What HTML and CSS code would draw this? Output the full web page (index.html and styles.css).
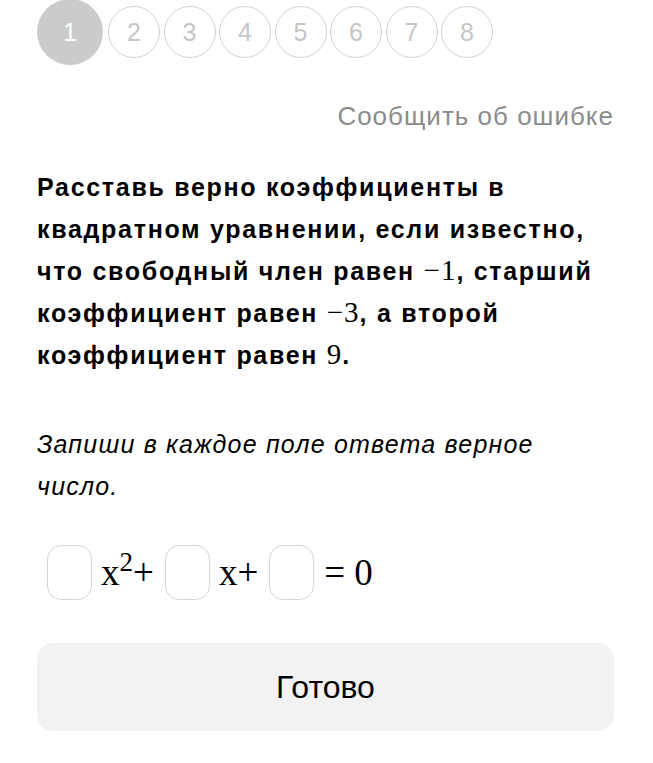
FILE: index.html
```html
<!DOCTYPE html>
<html>
<head>
  <meta charset="utf-8">
  <title>Задание</title>
  <link rel="stylesheet" href="styles.css">
</head>
<body>
  <div class="steps">
    <div class="step current">1</div>
    <div class="step">2</div>
    <div class="step">3</div>
    <div class="step">4</div>
    <div class="step">5</div>
    <div class="step">6</div>
    <div class="step">7</div>
    <div class="step">8</div>
  </div>

  <div class="report">Сообщить об ошибке</div>

  <p class="question">
    Расставь верно коэффициенты в квадратном уравнении, если известно,
    что свободный член равен <span class="math">−1</span>, старший
    коэффициент равен <span class="math">−3</span>, а второй
    коэффициент равен <span class="math">9</span>.
  </p>

  <p class="hint">Запиши в каждое поле ответа верное число.</p>

  <div class="equation">
    <input class="answer" type="text">
    <span class="term">x<sup>2</sup>+</span>
    <input class="answer" type="text">
    <span class="term">x+</span>
    <input class="answer" type="text">
    <span class="term rhs">= 0</span>
  </div>

  <button class="done">Готово</button>
</body>
</html>
```

FILE: styles.css
```css
body {
  font-family: "Liberation Sans", Arial, sans-serif;
  margin: 0;
  padding: 0 39px 0 37px;
  color: #000;
  background: #fff;
}
.steps {
  display: flex;
  align-items: center;
  gap: 3.5px;
  height: 66px;
  margin-top: -1px;
}
.step {
  box-sizing: border-box;
  width: 52px;
  height: 52px;
  border: 1.5px solid #d3d3d3;
  border-radius: 50%;
  display: flex;
  align-items: center;
  justify-content: center;
  font-size: 25px;
  color: #c6c6c6;
}
.step.current {
  width: 66px;
  height: 66px;
  border: none;
  background-color: #cbcbcb;
  color: #fff;
  margin-right: 1.5px;
}
.report {
  margin-top: 36px;
  text-align: right;
  font-size: 26px;
  letter-spacing: 1px;
  line-height: 30px;
  color: #8c8c8c;
}
.question {
  margin: 35px 0 0;
  font-size: 25px;
  font-weight: bold;
  letter-spacing: 1.7px;
  line-height: 42px;
}
.math {
  font-family: "Liberation Serif", "Times New Roman", serif;
  font-weight: normal;
  font-size: 29px;
  line-height: 1;
  letter-spacing: 1px;
}
.hint {
  margin: 47px 0 0;
  font-size: 25px;
  font-style: italic;
  letter-spacing: 1.2px;
  line-height: 42px;
}
.equation {
  display: flex;
  align-items: center;
  margin: 38px 0 0 10px;
  height: 55px;
  font-family: "Liberation Serif", "Times New Roman", serif;
  font-size: 37px;
}
.answer {
  box-sizing: border-box;
  width: 45px;
  height: 55px;
  border: 1.5px solid #d6d6d6;
  border-radius: 14px;
  background: #fff;
  padding: 0;
  outline: none;
}
.term {
  margin: 0 11px 0 9px;
  line-height: 55px;
}
.term sup {
  font-size: 27px;
  line-height: 0;
  vertical-align: 14px;
}
.term.rhs {
  margin-left: 10px;
}
.done {
  display: block;
  width: 100%;
  height: 88px;
  margin-top: 43px;
  border: none;
  border-radius: 16px;
  background-color: #f2f2f2;
  font-family: "Liberation Sans", Arial, sans-serif;
  font-size: 32px;
  color: #000;
}
```
